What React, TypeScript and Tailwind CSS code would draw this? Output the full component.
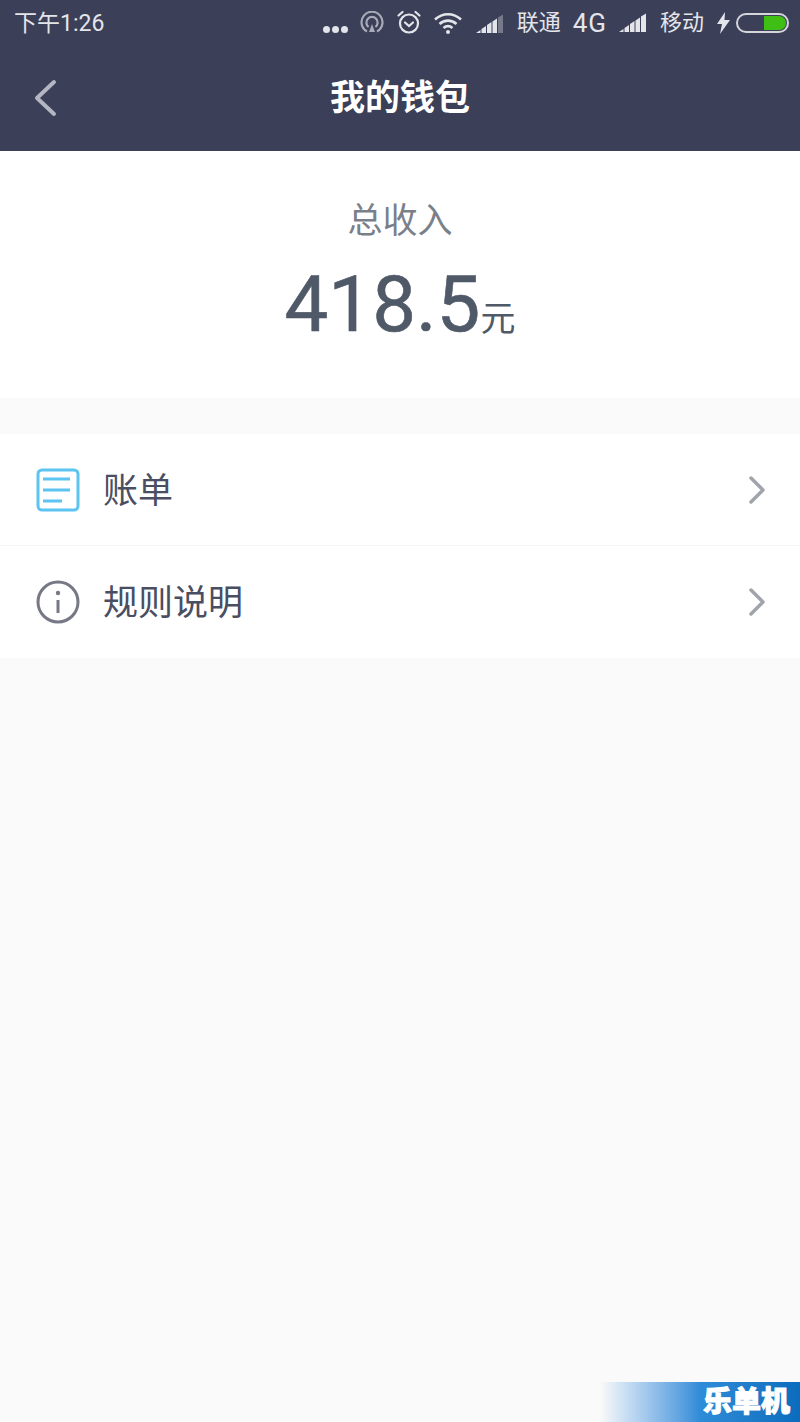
const cjk = "font-['Roboto','Noto_Sans_CJK_SC',sans-serif]"

function Signal({ dim = false }: { dim?: boolean }) {
  return (
    <svg width="28" height="20" viewBox="0 0 28 20" fill="#e4e5ea">
      <path d="M0 19l4.500-3v3z" />
      <path d="M5.500 15l4.500-3v7H5.500z" />
      <path d="M11 11l4.500-3v11H11z" />
      <path d="M16.500 7.500l4.500-3V19h-4.500z" />
      <path d="M22 3.500l5-3V19h-5z" opacity={dim ? 0.35 : 1} />
    </svg>
  )
}

function StatusBar() {
  return (
    <div className="flex h-[46px] items-center justify-between pl-[14px] pr-[11px] text-[#e4e5ea]">
      <span className="text-[23px] leading-none">下午1:26</span>
      <div className="flex items-center">
        <div className="mt-[12px] flex gap-[2px]">
          <span className="size-[7px] rounded-full bg-[#e4e5ea]" />
          <span className="size-[7px] rounded-full bg-[#e4e5ea]" />
          <span className="size-[7px] rounded-full bg-[#e4e5ea]" />
        </div>
        <svg className="ml-[12px]" width="24" height="24" viewBox="0 0 24 24" fill="none" stroke="#a9abb8" strokeWidth="2.2">
          <path d="M7 20.5a10.5 10.5 0 1 1 10 0" />
          <path d="M8.600 16a5.600 5.600 0 1 1 6.800 0" />
          <path d="M12 13l3 8H9z" fill="#a9abb8" stroke="none" />
        </svg>
        <svg className="ml-[12px] -mt-[3px]" width="26" height="26" viewBox="0 0 26 26" fill="none" stroke="#e4e5ea" strokeWidth="2.2" strokeLinecap="round">
          <circle cx="13" cy="14.500" r="9" />
          <path d="M9 13.500l4 3.500 4-3.500" />
          <path d="M2.500 6.500l4-3.500M23.500 6.500l-4-3.500" />
        </svg>
        <svg className="ml-[11px]" width="30" height="24" viewBox="0 0 30 24" fill="none" stroke="#e4e5ea" strokeWidth="2.600">
          <path d="M2 8.500c7.500-7 18.500-7 26 0" />
          <path d="M6.500 13c5-4.500 12-4.500 17 0" />
          <path d="M10.500 17c2.700-2.200 6.300-2.200 9 0" />
          <circle cx="15" cy="21" r="2" fill="#e4e5ea" stroke="none" />
        </svg>
        <div className="ml-[13px] mt-[2px]"><Signal dim /></div>
        <span className="ml-[13px] text-[22px] leading-none">联通</span>
        <span className="ml-[12px] text-[26px] leading-none tracking-[1px]">4G</span>
        <div className="ml-[12px]"><Signal /></div>
        <span className="ml-[13px] text-[22px] leading-none">移动</span>
        <svg className="ml-[13px]" width="13" height="22" viewBox="0 0 13 22" fill="#e4e5ea">
          <path d="M8 0L0 12h5l-2 10 10-14H7.500z" />
        </svg>
        <div className="ml-[6px] flex h-[20px] w-[53px] justify-end rounded-full border-2 border-[#d5d6dc] p-[1px]">
          <div className="h-full w-[22px] rounded-r-full rounded-l-[2px] bg-[#3fbf14]" />
        </div>
      </div>
    </div>
  )
}

function Header() {
  return (
    <div className="bg-[#3b3f57]">
      <StatusBar />
      <div className="relative flex h-[105px] items-center justify-center">
        <svg className="absolute left-[34px] top-[33px]" width="24" height="38" viewBox="0 0 24 38" fill="none" stroke="#b4b6c2" strokeWidth="4" strokeLinecap="round" strokeLinejoin="round">
          <path d="M20 3L3 19l17 16" />
        </svg>
        <h1 className="text-[35px] font-bold leading-none text-white">我的钱包</h1>
      </div>
    </div>
  )
}

function Chevron() {
  return (
    <svg width="18" height="28" viewBox="0 0 18 28" fill="none" stroke="#a2a4ad" strokeWidth="3.500" strokeLinecap="round" strokeLinejoin="round">
      <path d="M3 2l12 12L3 26" />
    </svg>
  )
}

function Row({ icon, label, divider }: { icon: React.ReactNode; label: string; divider?: boolean }) {
  return (
    <div className={`flex h-[112px] items-center pl-[36px] pr-[34px] ${divider ? 'border-b border-[#f5f5f5]' : ''}`}>
      {icon}
      <span className="ml-[23px] flex-1 pt-[3px] text-[35px] leading-none text-[#4a4e62]">{label}</span>
      <Chevron />
    </div>
  )
}

export default function App() {
  return (
    <div className={`flex h-[1422px] w-[800px] flex-col overflow-hidden bg-[#fafafa] ${cjk}`}>
      <Header />
      <div className="flex h-[247px] flex-col items-center bg-white pt-[53px]">
        <div className="text-[35px] leading-none text-[#7a808a]">总收入</div>
        <div className="mt-[27px] flex items-baseline text-[#4f5967]">
          <span className="text-[78px] leading-none [-webkit-text-stroke:0.6px_#4f5967]">418.5</span>
          <span className="text-[35px] leading-none">元</span>
        </div>
      </div>
      <div className="mt-[36px] bg-white">
        <Row
          divider
          label="账单"
          icon={
            <svg width="44" height="44" viewBox="0 0 44 44" fill="none" stroke="#5cc4f0" strokeWidth="3">
              <rect x="2" y="2" width="40" height="40" rx="4" />
              <path d="M7 11h27M7 22h27M7 33h19" />
            </svg>
          }
        />
        <Row
          label="规则说明"
          icon={
            <svg width="44" height="44" viewBox="0 0 44 44" fill="none" stroke="#767885" strokeWidth="3">
              <circle cx="22" cy="22" r="20" />
              <path d="M22 20v13" />
              <circle cx="22" cy="13" r="2.200" fill="#767885" stroke="none" />
            </svg>
          }
        />
      </div>
      <div className="mt-auto flex h-[40px] w-[200px] items-center justify-end self-end bg-gradient-to-r from-[#fafafa] via-[#2f8cd8] via-50% to-[#0a6cbd] pr-[10px] pt-[1px]">
        <span className="text-[29px] font-black leading-none text-white [-webkit-text-stroke:1px_white]">乐单机</span>
      </div>
    </div>
  )
}
